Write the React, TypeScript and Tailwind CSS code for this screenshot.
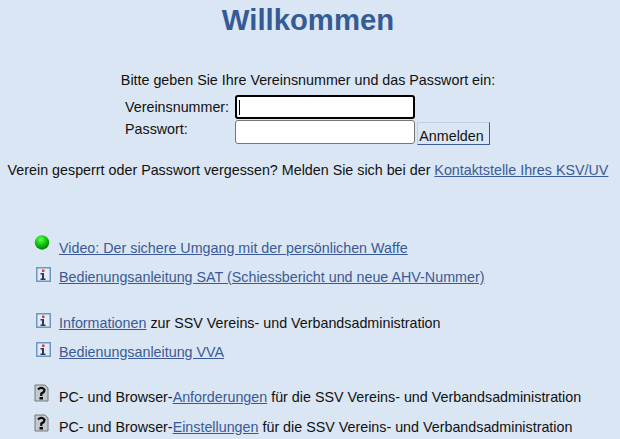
import type { ReactNode } from 'react';

function GreenBall() {
  return (
    <svg width="16" height="16" viewBox="0 0 16 16">
      <defs>
        <radialGradient id="ball" cx="0.42" cy="0.3" r="0.75">
          <stop offset="0" stopColor="#6dfb5e" />
          <stop offset="0.45" stopColor="#10d010" />
          <stop offset="1" stopColor="#047004" />
        </radialGradient>
      </defs>
      <circle cx="8" cy="7.500" r="7.200" fill="url(#ball)" />
    </svg>
  );
}

function InfoIcon() {
  return (
    <svg width="18" height="17" viewBox="0 0 18 17">
      <rect x="2.750" y="1.750" width="13.500" height="13.500" fill="#e4ebf4" stroke="#6b97c0" strokeWidth="1.500" />
      <rect x="8" y="3.500" width="2.500" height="2.500" fill="#c04848" />
      <path d="M6.500 7H10V12.500h1.500V14H6.500V12.500H8V8.500H6.500z" fill="#2a3b5e" />
    </svg>
  );
}

function DocIcon() {
  return (
    <svg width="15" height="18" viewBox="0 0 15 18">
      <path d="M1 1h10l3 3v13H1z" fill="#c4c9cf" stroke="#74787e" />
      <path d="M4 5.500q3.200-3.200 6.500 0q0 3-3.200 4v2.500" fill="none" stroke="#0c0c0c" strokeWidth="2.200" />
      <rect x="5.500" y="13" width="3.500" height="2.500" fill="#0c0c0c" />
    </svg>
  );
}

function Item({ icon, children, className, iconCls }: { icon: ReactNode; children: ReactNode; className: string; iconCls?: string }) {
  return (
    <div className={`flex items-start ${className}`}>
      <div className={`w-[25px] shrink-0 ${iconCls ?? ''}`}>{icon}</div>
      <div className="text-[14.3px] leading-[16px]">{children}</div>
    </div>
  );
}

const linkCls = 'text-[#3a5a95] underline';

export default function App() {
  return (
    <div className="h-[439px] overflow-hidden bg-[#dae6f3] font-['Liberation_Sans',Arial,sans-serif] text-[#111]">
      <h1 className="text-center text-[29.3px] leading-[34px] font-bold text-[#355a95] pt-[3px] pr-[4px]">Willkommen</h1>

      <p className="text-center text-[14.3px] leading-[16px] mt-[35px] pr-[4px]">Bitte geben Sie Ihre Vereinsnummer und das Passwort ein:</p>

      <div className="flex flex-col mt-[7px] pl-[125px]">
        <div className="flex items-center gap-[6px]">
          <label className="w-[104px] text-[14.3px] leading-[16px]">Vereinsnummer:</label>
          <div className="w-[180px] h-[24px] bg-white border-2 border-black rounded-[3px] flex items-center pl-[2px]">
            <div className="w-px h-[15px] bg-black" />
          </div>
        </div>
        <div className="flex items-start gap-[6px] mt-px">
          <label className="w-[104px] text-[14.3px] leading-[16px] pt-px">Passwort:</label>
          <input className="w-[180px] h-[24px] bg-white border border-[#767676] rounded-[3px]" />
          <button className="ml-[-4px] mt-[2px] h-[23px] w-[73px] pt-[4px] pr-[4px] text-[14.3px] leading-[16px] bg-[#dae6f3] border border-[#c3cfdd] border-b-[#3a5a95] border-r-[#3a5a95] text-[#111]">Anmelden</button>
        </div>
      </div>

      <p className="text-center text-[14.3px] leading-[16px] mt-[17px] pr-[4px]">
        Verein gesperrt oder Passwort vergessen? Melden Sie sich bei der <a className={linkCls}>Kontaktstelle Ihres KSV/UV</a>
      </p>

      <div className="pl-[34px] mt-[62px]">
        <Item icon={<GreenBall />} iconCls="-mt-[5px]" className="h-[29px]"><a className={linkCls}>Video: Der sichere Umgang mit der persönlichen Waffe</a></Item>
        <Item icon={<InfoIcon />} iconCls="-mt-[3px]" className="h-[46px]"><a className={linkCls}>Bedienungsanleitung SAT (Schiessbericht und neue AHV-Nummer)</a></Item>
        <Item icon={<InfoIcon />} iconCls="-mt-[3px]" className="h-[29px]"><><a className={linkCls}>Informationen</a> zur SSV Vereins- und Verbandsadministration</></Item>
        <Item icon={<InfoIcon />} iconCls="-mt-[3px]" className="h-[45px]"><a className={linkCls}>Bedienungsanleitung VVA</a></Item>
        <Item icon={<DocIcon />} iconCls="-mt-[5px]" className="h-[30px]"><>PC- und Browser-<a className={linkCls}>Anforderungen</a> für die SSV Vereins- und Verbandsadministration</></Item>
        <Item icon={<DocIcon />} iconCls="-mt-[5px]" className="h-[29px]"><>PC- und Browser-<a className={linkCls}>Einstellungen</a> für die SSV Vereins- und Verbandsadministration</></Item>
      </div>
    </div>
  );
}
